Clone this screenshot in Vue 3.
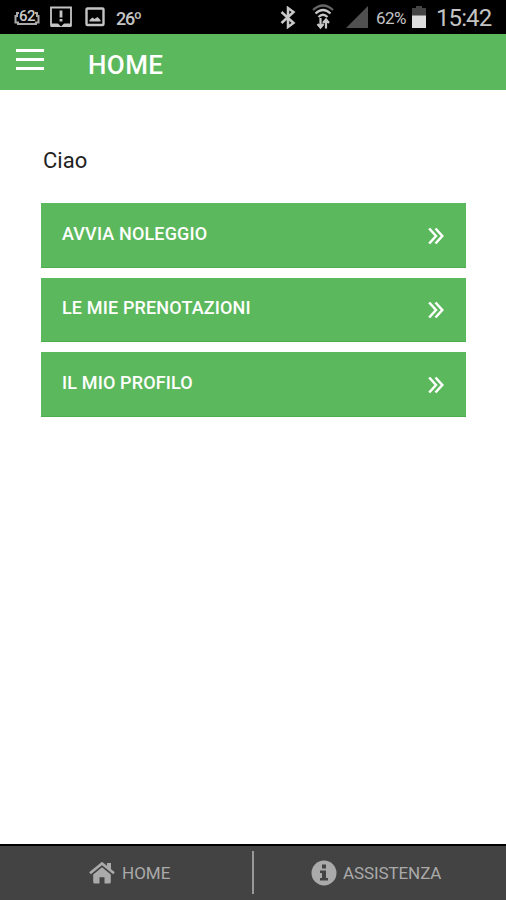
<template>
  <div class="screen">
    <div class="status-bar">
      <svg class="icon-news" width="26" height="18" viewBox="0 0 26 18">
        <path d="M5 5H3v3H1.500v6.500H4v1.500h18v-1.500h2.500V8H23V5h-2" fill="none" stroke="#aaa" stroke-width="2" />
        <text x="13" y="12.500" text-anchor="middle" font-size="15" font-weight="500" letter-spacing="-0.500" fill="#ccc">62</text>
      </svg>
      <svg class="icon-alert" width="22" height="22" viewBox="0 0 22 22">
        <path d="M1 1.500h20v18H1z" fill="none" stroke="#c4c4c4" stroke-width="1.800" />
        <path d="M1 17.500h20V21H1z" fill="#c4c4c4" />
        <path d="M7 16.500h8l-4 4z" fill="#000" />
        <path d="M11 4.500v7M11 13v2.500" stroke="#c4c4c4" stroke-width="2.800" />
      </svg>
      <svg class="icon-image" width="20" height="20" viewBox="0 0 20 20">
        <rect x="1.500" y="1.500" width="17" height="16.500" rx="1" fill="none" stroke="#c4c4c4" stroke-width="2.400" />
        <path d="M4.500 14.500V13l3-2.500 2 1.500 3-2 3 3v1.500z" fill="#c4c4c4" />
      </svg>
      <span class="temperature">26º</span>
      <div class="status-right">
        <svg class="icon-bluetooth" width="16" height="23" viewBox="0 0 16 23">
          <path d="M1.500 6l12 11L8 21v-19l5.500 4-12 11" fill="none" stroke="#c8c8c8" stroke-width="2.500" />
        </svg>
        <svg class="icon-wifi" width="22" height="26" viewBox="0 0 22 26">
          <path d="M1 6q10-9 20 0" fill="none" stroke="#666" stroke-width="2.200" />
          <path d="M3.500 9.500q7.500-7 15 0M6.500 13q4.500-4.500 9 0" fill="none" stroke="#c8c8c8" stroke-width="2.300" />
          <path d="M8.500 14v9M5.500 20l3 3.500 3-3.500M14 24.500V16M11 19l3-3.500 3 3.500" fill="none" stroke="#c8c8c8" stroke-width="2.200" />
        </svg>
        <svg class="icon-signal" width="22" height="22" viewBox="0 0 22 22">
          <path d="M22 0v22H0z" fill="#505050" />
        </svg>
        <span class="percent">62%</span>
        <svg class="icon-battery" width="14" height="22" viewBox="0 0 14 22">
          <path d="M4 0h6v2h4v8H0V2h4z" fill="#444" />
          <path d="M0 9.500h14V22H0z" fill="#ddd" />
        </svg>
        <span class="clock">15:42</span>
      </div>
    </div>

    <header class="header">
      <button class="menu-button" aria-label="Menu">
        <span></span>
        <span></span>
        <span></span>
      </button>
      <h1 class="title">HOME</h1>
    </header>

    <main class="content">
      <p class="greeting">Ciao</p>
      <button v-for="item in items" :key="item" class="action">
        <span>{{ item }}</span>
        <svg class="chevrons" width="16" height="18" viewBox="0 0 16 18">
          <path d="M1.200 1.500L8 9l-6.800 7.500M7.500 1.500L14.300 9l-6.800 7.500" fill="none" stroke="#fff" stroke-width="2.500" />
        </svg>
      </button>
    </main>

    <footer class="footer">
      <div class="tab tab-home">
        <svg width="26" height="22" viewBox="0 0 26 22">
          <path d="M4.200 12.500L13 5.300l8.800 7.200V20q0 1.500-1.500 1.500h-4.800v-6.200h-5v6.200H5.700q-1.500 0-1.500-1.500z" fill="#aaa" />
          <path d="M18 1h4v8l-4-3.300z" fill="#aaa" />
          <path d="M2.500 12.800L13 4.300l10.500 8.500" fill="none" stroke="#434343" stroke-width="1" />
          <path d="M1 11.200l12-9.700 12 9.700" fill="none" stroke="#aaa" stroke-width="2.700" />
        </svg>
        <span>HOME</span>
      </div>
      <div class="divider"></div>
      <div class="tab tab-help">
        <svg width="26" height="26" viewBox="0 0 26 26">
          <circle cx="13" cy="13" r="12.500" fill="#aaa" />
          <path d="M11 4.500h4v4h-4zM9 10.500h6v7.500h2v2.500H9V18h2v-5H9z" fill="#434343" />
        </svg>
        <span>ASSISTENZA</span>
      </div>
    </footer>
  </div>
</template>

<script setup>
const items = ['AVVIA NOLEGGIO', 'LE MIE PRENOTAZIONI', 'IL MIO PROFILO'];
</script>

<style>
body {
  margin: 0;
  background: #fff;
}
</style>

<style scoped>
.screen {
  height: 900px;
  display: flex;
  flex-direction: column;
  overflow: hidden;
  font-family: Roboto, 'Liberation Sans', sans-serif;
}

.screen svg {
  display: block;
  flex: none;
}

.status-bar {
  box-sizing: border-box;
  height: 34px;
  flex: none;
  display: flex;
  align-items: center;
  padding: 0 15px 0 14px;
  background: #000;
  color: #c4c4c4;
}

.icon-alert {
  margin-left: 10px;
}

.icon-image {
  margin-left: 13px;
}

.temperature {
  margin-left: 11px;
  padding-top: 2px;
  font-size: 18px;
  font-weight: 500;
  letter-spacing: -1.3px;
}

.status-right {
  margin-left: auto;
  display: flex;
  align-items: center;
}

.icon-wifi {
  margin-left: 16px;
}

.icon-signal {
  margin-left: 12px;
}

.percent {
  width: 31px;
  margin-left: 8px;
  padding-top: 2px;
  font-size: 17px;
  letter-spacing: -0.5px;
}

.icon-battery {
  margin-left: 5px;
}

.clock {
  width: 55px;
  margin-left: 10px;
  padding-top: 2px;
  font-size: 24px;
  letter-spacing: -0.9px;
}

.header {
  height: 56px;
  flex: none;
  display: flex;
  background: #5cb85c;
}

.menu-button {
  width: 28px;
  height: 21px;
  margin: 15px 0 0 16px;
  padding: 0;
  border: 0;
  background: none;
  display: flex;
  flex-direction: column;
  justify-content: space-between;
}

.menu-button span {
  width: 28px;
  height: 3px;
  background: #fff;
}

.title {
  margin: 16px 0 0 44px;
  font-size: 26px;
  line-height: 30px;
  font-weight: 500;
  letter-spacing: 0.4px;
  color: #fff;
}

.content {
  flex: 1;
  padding: 58px 40px 0 41px;
}

.greeting {
  margin: 0 0 29px 2px;
  font-size: 22px;
  line-height: 26px;
  color: #222;
}

.action {
  box-sizing: border-box;
  width: 100%;
  height: 64.5px;
  margin: 0 0 10px;
  padding: 0 22px 3px 21px;
  display: flex;
  align-items: center;
  justify-content: space-between;
  border: 0;
  border-bottom: 1px solid #4cae4c;
  background: #5cb85c;
  font-family: inherit;
  font-size: 18px;
  font-weight: 500;
  letter-spacing: 0.15px;
  color: #fff;
}

.chevrons {
  margin-top: 5px;
}

.footer {
  box-sizing: border-box;
  height: 56px;
  flex: none;
  display: flex;
  border-top: 2px solid #000;
  background: #434343;
  color: #aaa;
  font-size: 17px;
}

.tab {
  box-sizing: border-box;
  width: 252px;
  flex: none;
  display: flex;
  align-items: center;
}

.tab-home {
  padding-left: 89px;
  gap: 7px;
}

.tab-help {
  padding-left: 57px;
  gap: 6px;
  letter-spacing: -0.1px;
}

.divider {
  width: 2px;
  height: 43px;
  margin-top: 5px;
  background: #999;
}
</style>
